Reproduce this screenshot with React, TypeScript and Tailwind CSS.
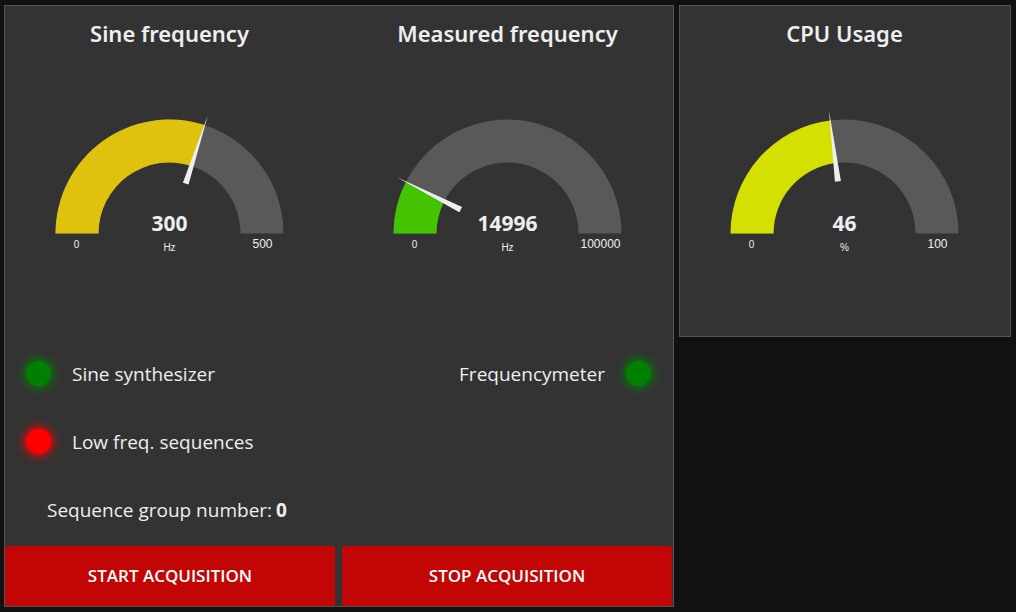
type GaugeProps = {
  title: string;
  value: number;
  max: number;
  unit: string;
  color: string;
};

const CX = 164.5;
const CY = 227.5;
const OUTER = 114;
const INNER = 71;

function point(radius: number, angle: number) {
  return `${(CX - radius * Math.cos(angle)).toFixed(2)} ${(CY - radius * Math.sin(angle)).toFixed(2)}`;
}

function band(angle: number) {
  return `M${point(OUTER, 0)} A${OUTER} ${OUTER} 0 0 1 ${point(OUTER, angle)} L${point(INNER, angle)} A${INNER} ${INNER} 0 0 0 ${point(INNER, 0)} Z`;
}

function Gauge({ title, value, max, unit, color }: GaugeProps) {
  const angle = (value / max) * Math.PI;
  const degrees = (value / max) * 180 - 90;
  return (
    <section className="min-w-0">
      <svg viewBox="0 0 330 330" className="block w-full" role="img" aria-label={`${title}: ${value} ${unit}`}>
        <text x={CX} y="36" textAnchor="middle" className="fill-[#eeeeee] font-['Noto_Sans','Open_Sans',sans-serif] text-[22px] font-semibold">
          {title}
        </text>
        <path d={band(Math.PI)} fill="#595959" />
        <path d={band(angle)} fill={color} />
        <path
          d={`M${CX - 3} ${CY - 52.5} L${CX} ${CY - 124} L${CX + 3} ${CY - 52.5} Z`}
          fill="#eeeeee"
          transform={`rotate(${degrees.toFixed(2)} ${CX} ${CY})`}
        />
        <text x={CX} y="225" textAnchor="middle" className="fill-[#eeeeee] text-[21px] font-bold">
          {value}
        </text>
        <g className="fill-[#eeeeee] font-['Liberation_Sans',Arial,sans-serif]" textAnchor="middle">
          <text x={CX} y="245" className="text-[10px]">{unit}</text>
          <text x={CX - 93} y="242" className="text-[10px]">0</text>
          <text x={CX + 93} y="242" className="text-[12px]">{max}</text>
        </g>
      </svg>
    </section>
  );
}

function Led({ on }: { on: boolean }) {
  return (
    <span
      className={
        on
          ? "mb-0.5 size-[25px] shrink-0 rounded-full bg-[#008000] shadow-[0_0_10px_2px_#008000]"
          : "mb-0.5 size-[25px] shrink-0 rounded-full bg-[#ff0000] shadow-[0_0_10px_2px_#ff0000]"
      }
    />
  );
}

function ActionButton({ label }: { label: string }) {
  return (
    <button
      type="button"
      className="h-[60px] rounded-[3px] bg-[#c20505] text-[17px] font-semibold text-white uppercase hover:bg-[#d31414]"
    >
      {label}
    </button>
  );
}

export default function App() {
  return (
    <main className="grid min-h-screen grid-cols-[335fr_166fr] items-start gap-[5px] bg-[#111111] pt-[5px] pr-[5px] pb-[5px] pl-1 font-['Open_Sans','Noto_Sans',sans-serif] text-[#eeeeee]">
      <div className="border border-[#555555] bg-[#333333]">
        <div className="grid grid-cols-2 gap-2">
          <Gauge title="Sine frequency" value={300} max={500} unit="Hz" color="#dfc20d" />
          <Gauge title="Measured frequency" value={14996} max={100000} unit="Hz" color="#44c300" />
        </div>
        <div className="mt-1 mb-0.5 text-[19px]">
          <div className="flex h-[68px] items-center justify-between pr-[22px] pl-[21px]">
            <div className="flex items-center gap-[21px]">
              <Led on />
              <span>Sine synthesizer</span>
            </div>
            <div className="flex items-center gap-[21px]">
              <span>Frequencymeter</span>
              <Led on />
            </div>
          </div>
          <div className="flex h-[68px] items-center gap-[21px] pl-[21px]">
            <Led on={false} />
            <span>Low freq. sequences</span>
          </div>
          <div className="flex h-[68px] items-center gap-1 pl-[42px]">
            <span>Sequence group number:</span>
            <span className="font-bold">0</span>
          </div>
        </div>
        <div className="grid grid-cols-2 gap-[7px] pr-px">
          <ActionButton label="Start acquisition" />
          <ActionButton label="Stop acquisition" />
        </div>
      </div>
      <div className="border border-[#555555] bg-[#333333]">
        <Gauge title="CPU Usage" value={46} max={100} unit="%" color="#d4e100" />
      </div>
    </main>
  );
}
